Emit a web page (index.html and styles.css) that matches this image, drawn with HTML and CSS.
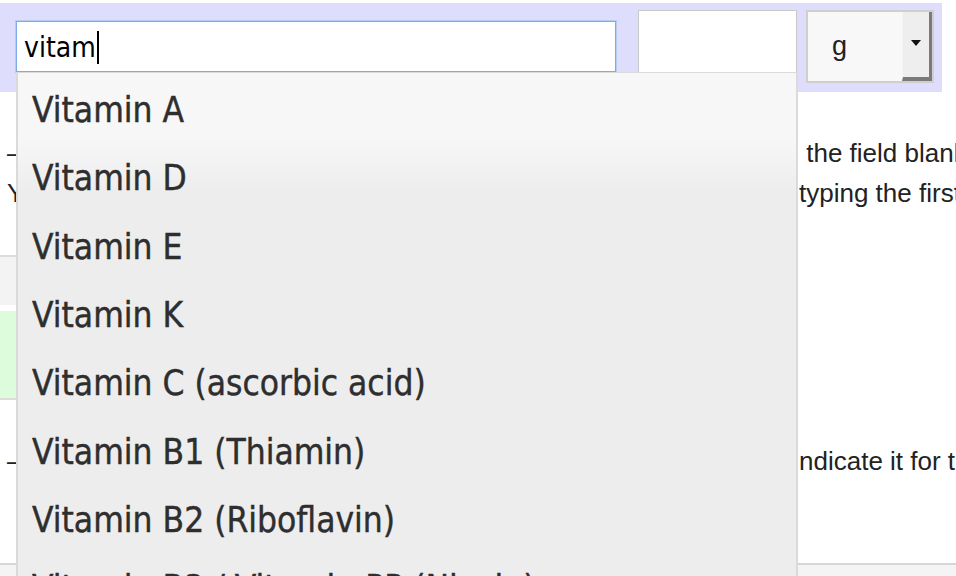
FILE: index.html
```html
<!DOCTYPE html>
<html>
<head>
<meta charset="utf-8">
<link rel="stylesheet" href="styles.css">
</head>
<body>
<div class="page">
  <div class="band">
    <div class="search"><span class="typed">vitam</span><span class="caret"></span></div>
    <div class="qty"></div>
    <div class="unit">
      <span class="unit-val">g</span>
      <span class="unit-btn"><span class="tri"></span></span>
    </div>
  </div>

  <div class="note">
    <div class="line"><span class="l">– If you do not know the exact quantity, you can leave</span><span class="r"> the field blank and add it later.</span></div>
    <div class="line"><span class="l">You can quickly find a nutrient by</span><span class="r">typing the first letters of its name.</span></div>
  </div>

  <div class="rows">
    <div class="row-head"></div>
    <div class="row-ok"></div>
  </div>

  <div class="note note2">
    <div class="line"><span class="l">– If the nutrient is not in the list, please i</span><span class="r">ndicate it for the team.</span></div>
  </div>

  <div class="footer"></div>

  <ul class="menu">
    <li>Vitamin A</li>
    <li>Vitamin D</li>
    <li>Vitamin E</li>
    <li>Vitamin K</li>
    <li>Vitamin C (ascorbic acid)</li>
    <li>Vitamin B1 (Thiamin)</li>
    <li>Vitamin B2 (Riboflavin)</li>
    <li>Vitamin B3 / Vitamin PP (Niacin)</li>
  </ul>
</div>
</body>
</html>
```

FILE: styles.css
```css
html, body {
  margin: 0;
  padding: 0;
  background: #fff;
  overflow: hidden;
}
body {
  width: 956px;
  height: 576px;
  font-family: "Liberation Sans", Arial, sans-serif;
}
.page {
  position: relative;
  height: 576px;
  overflow: hidden;
}
.band {
  margin-top: 3px;
  width: 942px;
  height: 89px;
  box-sizing: border-box;
  padding: 7px 0 0 16px;
  background: #dedefc;
  display: flex;
  align-items: flex-start;
}
.search {
  margin-top: 11px;
  width: 600px;
  height: 51px;
  box-sizing: border-box;
  border: 1px solid #7ea9ea;
  box-shadow: 0 0 0 1px #b3cdf5;
  background: #fff;
  display: flex;
  align-items: center;
  padding: 2px 0 0 7px;
  font-family: "DejaVu Sans Condensed", "DejaVu Sans", sans-serif;
  font-stretch: condensed;
  font-size: 28px;
  color: #000;
}
.caret {
  display: inline-block;
  width: 2px;
  height: 33px;
  background: #000;
  margin-left: 1px;
}
.qty {
  margin-left: 22px;
  width: 159px;
  height: 73px;
  box-sizing: border-box;
  border: 1px solid #c9c9c9;
  background: #fff;
}
.unit {
  margin-left: 9px;
  width: 128px;
  height: 73px;
  box-sizing: border-box;
  border: 2px solid #cfcfcf;
  background: #f8f8f8;
  display: flex;
  align-items: stretch;
}
.unit-val {
  flex: 1;
  display: flex;
  align-items: center;
  padding-left: 24px;
  font-size: 27px;
  color: #222;
}
.unit-btn {
  width: 30px;
  box-sizing: border-box;
  background: #eeeeee;
  border-left: 1px solid #f4f4f4;
  border-right: 3px solid #7a7a7a;
  border-bottom: 4px solid #7a7a7a;
  display: flex;
  align-items: center;
  justify-content: center;
  padding-bottom: 3px;
}
.tri {
  width: 0;
  height: 0;
  border-left: 5px solid transparent;
  border-right: 5px solid transparent;
  border-top: 6px solid #111;
}
.note {
  margin-top: 41px;
  font-size: 26px;
  line-height: 40px;
  color: #222;
}
.line {
  display: grid;
  grid-template-columns: 799px 1fr;
  white-space: nowrap;
}
.line .l {
  padding-left: 7px;
  overflow: hidden;
}
.line .r {
  overflow: hidden;
  white-space: pre;
}
.rows {
  margin-top: 42px;
  width: 600px;
}
.row-head {
  height: 48px;
  border-top: 2px solid #dcdcdc;
  background: #f3f3f3;
}
.row-ok {
  margin-top: 6px;
  height: 87px;
  background: #ddfcdc;
  border-bottom: 2px solid #dcdcdc;
}
.note2 {
  margin-top: 41px;
}
.footer {
  margin-top: 82px;
  height: 40px;
  border-top: 2px solid #d6d6d6;
  background: #f4f4f4;
}
.menu {
  position: absolute;
  left: 16px;
  top: 72px;
  width: 782px;
  height: 560px;
  box-sizing: border-box;
  margin: 0;
  padding: 3px 0 0 0;
  list-style: none;
  border: 2px solid #dadada;
  border-top-width: 1px;
  background: linear-gradient(#f7f7f7 0, #f7f7f7 66px, #ededed 118px, #ededed 100%);
  font-family: "DejaVu Sans Condensed", "DejaVu Sans", sans-serif;
  font-stretch: condensed;
  font-size: 35px;
  color: #2e2e2e;
  -webkit-text-stroke: 0.4px #2e2e2e;
}
.menu li {
  height: 68.35px;
  line-height: 68.35px;
  padding-left: 14px;
  white-space: nowrap;
}
```
